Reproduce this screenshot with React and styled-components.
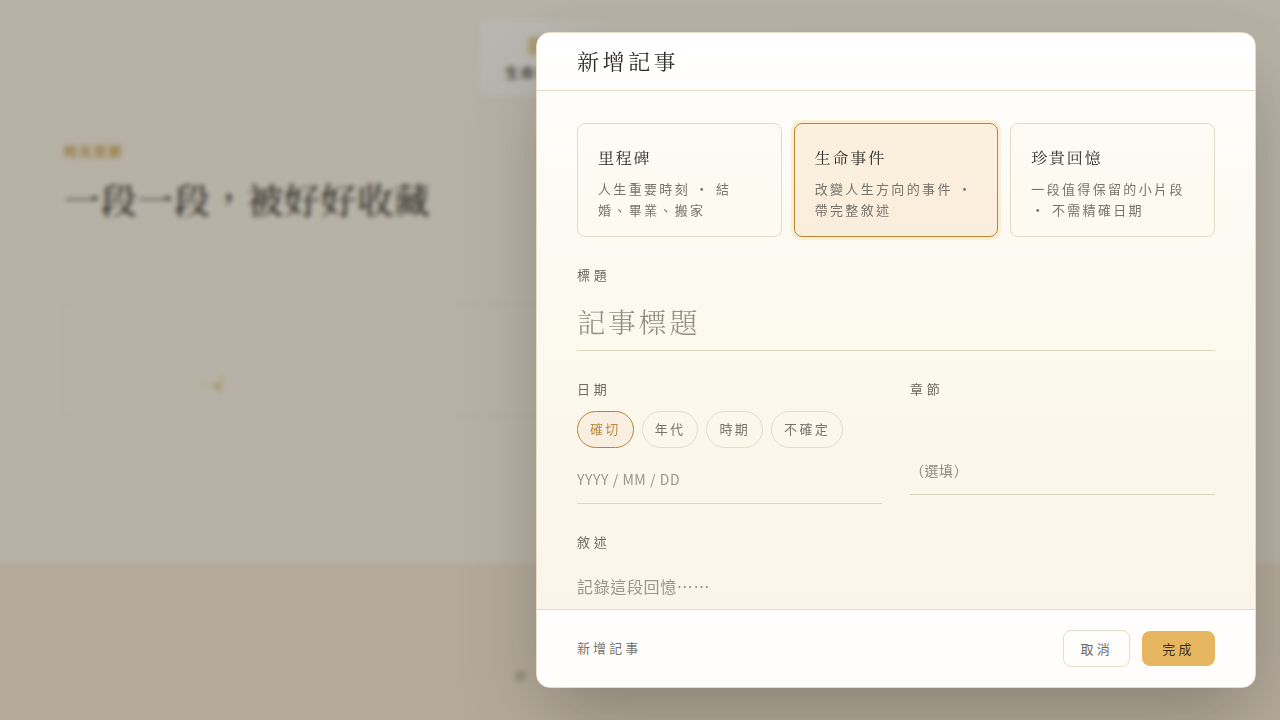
import { useState } from 'react';
import styled, { createGlobalStyle, css } from 'styled-components';

const sans = `'Noto Sans CJK TC', 'Noto Sans', sans-serif`;
const serif = `'Noto Serif TC', 'Noto Serif CJK TC', 'Noto Serif CJK JP', 'Liberation Serif', serif`;

const types = [
	{ id: 'milestone', title: '里程碑', text: '人生重要時刻 · 結婚、畢業、搬家' },
	{ id: 'event', title: '生命事件', text: '改變人生方向的事件 · 帶完整敘述' },
	{ id: 'memory', title: '珍貴回憶', text: '一段值得保留的小片段 · 不需精確日期' },
];

const precisions = ['確切', '年代', '時期', '不確定'];

export default function App() {
	const [ type, setType ] = useState('event');
	const [ precision, setPrecision ] = useState('確切');

	return (
		<>
			<GlobalStyle />
			<Page>
				<Tabs>
					<Tab>
						<TabIcon />
						生命事件
					</Tab>
				</Tabs>
				<Chapters>
					<Eyebrow>時光章節</Eyebrow>
					<Heading>一段一段，被好好收藏</Heading>
					<EmptyBox>
						<svg width='40' height='24' viewBox='0 0 40 24' fill='none'>
							<path d='M2 11h20l11-8-4 17-9-8' stroke='#e8daae' strokeWidth='1.5' />
							<circle cx='27' cy='13' r='3' fill='#d3c59c' />
						</svg>
					</EmptyBox>
				</Chapters>
				<Bottom>
					<Dot />
				</Bottom>
			</Page>

			<Overlay>
				<Modal>
					<Header>新增記事</Header>

					<Body>
						<TypeGrid>
							{types.map((item)=> (
								<TypeCard
									key={item.id}
									$active={item.id === type}
									onClick={()=>setType(item.id)}
								>
									<TypeTitle>{item.title}</TypeTitle>
									<TypeText>{item.text}</TypeText>
								</TypeCard>
							))}
						</TypeGrid>

						<Field>
							<Label>標題</Label>
							<TitleInput placeholder='記事標題' />
						</Field>

						<Columns>
							<Field>
								<Label>日期</Label>
								<Pills>
									{precisions.map((item)=> (
										<Pill
											key={item}
											$active={item === precision}
											onClick={()=>setPrecision(item)}
										>
											{item}
										</Pill>
									))}
								</Pills>
								<DateInput placeholder='YYYY / MM / DD' />
							</Field>
							<Field>
								<Label>章節</Label>
								<ChapterSelect>（選填）</ChapterSelect>
							</Field>
						</Columns>

						<Field>
							<Label>敘述</Label>
							<Story placeholder='記錄這段回憶⋯⋯' />
						</Field>
					</Body>

					<Footer>
						<FooterText>新增記事</FooterText>
						<Button>取消</Button>
						<Button $primary>完成</Button>
					</Footer>
				</Modal>
			</Overlay>
		</>
	);
}


// STYLES

const GlobalStyle = createGlobalStyle`
	* {
		box-sizing: border-box;
	}
	body {
		margin: 0;
		overflow: hidden;
		font-family: ${sans};
		color: #2f2d29;
	}
	button, input, textarea {
		font-family: inherit;
		margin: 0;
	}
`;

const Page = styled.div`
	display: flex;
	flex-direction: column;
	height: 720px;
	background-color: #f5f0e4;
`;

const Tabs = styled.nav`
	display: flex;
	align-self: center;
	width: 320px;
	height: 76px;
	margin-top: 20px;
	padding: 17px 25px 0;
	border-radius: 8px;
	background: linear-gradient(90deg, #f8f6f3 0, #f8f6f3 60px, #f6f2e8 130px);
`;

const Tab = styled.div`
	display: flex;
	flex-direction: column;
	align-items: center;
	gap: 6px;
	font-size: 14px;
	line-height: 22px;
	font-weight: 500;
	letter-spacing: 0.1em;
	color: #45423c;
`;

const TabIcon = styled.div`
	flex: none;
	width: 16px;
	height: 18px;
	border-radius: 4px;
	background-color: #e3cf9c;
`;

const Chapters = styled.section`
	height: 467px;
	padding: 45px 64px 0;
`;

const Eyebrow = styled.div`
	font-size: 13px;
	line-height: 20px;
	font-weight: 700;
	letter-spacing: 0.14em;
	color: #c9a455;
	text-shadow: 0 0 24px rgba(230, 200, 120, 0.25);
`;

const Heading = styled.h2`
	margin: 10px 0 76px;
	font-family: ${serif};
	font-size: 36px;
	line-height: 56px;
	font-weight: 500;
	letter-spacing: 0.018em;
`;

const EmptyBox = styled.div`
	height: 114px;
	margin-left: -2px;
	padding: 68px 0 0 127px;
	border: 2px solid #efe7d3;
	border-radius: 4px;
`;

const Bottom = styled.section`
	flex: 1;
	padding: 107px 0 0 514px;
	background-color: #f0e4d3;
`;

const Dot = styled.div`
	width: 13px;
	height: 12px;
	border-radius: 50%;
	background-color: #cbc1ab;
`;

const Overlay = styled.div`
	position: fixed;
	inset: 0;
	display: flex;
	justify-content: flex-end;
	padding: 32px 24px;
	background-color: rgba(40, 36, 28, 0.3);
	backdrop-filter: blur(2.6px);
`;

const Modal = styled.div`
	display: flex;
	flex-direction: column;
	width: 720px;
	height: 656px;
	border: 1px solid #e8dcc4;
	border-radius: 14px;
	background: linear-gradient(180deg, #fffefd 0%, #fcf9f0 38%, #fbf8ec 55%, #fcf5ea 82%, #faf5e8 92%);
	box-shadow: 0 32px 80px -10px rgba(47, 43, 30, 0.34);
	overflow: hidden;
`;

const Header = styled.div`
	flex: none;
	height: 58px;
	padding: 0 40px;
	border-bottom: 1px solid #e6d8c2;
	background-color: rgba(255, 255, 255, 0.6);
	font-family: ${serif};
	font-size: 22px;
	line-height: 55px;
	font-weight: 400;
	letter-spacing: 0.16em;
`;

const Body = styled.div`
	flex: 1;
	min-height: 0;
	padding: 32px 40px 0;
	overflow: hidden;
`;

const TypeGrid = styled.div`
	display: grid;
	grid-template-columns: repeat(3, 1fr);
	gap: 12px;
	margin-bottom: 27px;
`;

const TypeCard = styled.button`
	height: 114px;
	padding: 17px 20px 15px;
	border: 1px solid #e3dcc4;
	border-radius: 8px;
	background-color: rgba(253, 250, 240, 0.5);
	text-align: left;
	cursor: pointer;
	${({ $active })=> $active && css`
		border-color: #b9852f;
		background: linear-gradient(180deg, #fbf0de, #faeddb);
		box-shadow: 0 0 0 3px #fbeed4;
	`}
`;

const TypeTitle = styled.div`
	margin-bottom: 4px;
	font-family: ${serif};
	font-size: 16px;
	line-height: 34px;
	font-weight: 400;
	letter-spacing: 0.11em;
	color: #2f2d29;
`;

const TypeText = styled.div`
	font-size: 13px;
	line-height: 20.8px;
	letter-spacing: 0.18em;
	color: #77726a;
`;

const Field = styled.div`
	display: flex;
	flex-direction: column;
`;

const Label = styled.label`
	height: 21px;
	font-size: 13px;
	line-height: 21px;
	letter-spacing: 0.28em;
	color: #6f6a60;
`;

const inputStyle = css`
	display: block;
	width: 100%;
	padding: 0;
	border: none;
	border-bottom: 1px solid #ddd6c0;
	border-radius: 0;
	outline: none;
	background: none;
	color: #2f2d29;
	&::placeholder {
		color: #9b968a;
		opacity: 1;
	}
`;

const TitleInput = styled.input`
	${inputStyle}
	height: 57px;
	margin: 9px 0 27px;
	padding-bottom: 2px;
	font-family: ${serif};
	font-size: 28px;
	font-weight: 300;
	letter-spacing: 0.1em;
	&::placeholder {
		color: #928e82;
	}
`;

const Columns = styled.div`
	display: grid;
	grid-template-columns: 1fr 1fr;
	gap: 28px;
	margin-bottom: 27px;
`;

const Pills = styled.div`
	display: flex;
	gap: 8px;
	margin: 12px 0 8px;
`;

const Pill = styled.button`
	height: 37px;
	padding: 0 12px 2px;
	border: 1px solid #e3ddcb;
	border-radius: 999px;
	background: none;
	font-size: 13px;
	letter-spacing: 0.18em;
	color: #77726a;
	cursor: pointer;
	${({ $active })=> $active && css`
		border-color: #b9852f;
		background-color: #f8efe2;
		color: #b98a3f;
	`}
`;

const DateInput = styled.input`
	${inputStyle}
	height: 48px;
	padding-bottom: 2px;
	font-size: 14px;
	letter-spacing: 0.04em;
`;

const ChapterSelect = styled.div`
	${inputStyle}
	height: 47px;
	margin-top: 49px;
	font-size: 14px;
	line-height: 44px;
	letter-spacing: 0.04em;
	color: #8f8a7e;
`;

const Story = styled.textarea`
	${inputStyle}
	height: 160px;
	margin-top: 8px;
	padding-top: 12px;
	font-size: 16px;
	line-height: 29px;
	letter-spacing: 0.04em;
	resize: none;
`;

const Footer = styled.div`
	flex: none;
	display: flex;
	align-items: center;
	gap: 12px;
	height: 78px;
	padding: 0 40px;
	border-top: 1px solid #e6d8c2;
	background-color: #fffefd;
`;

const FooterText = styled.span`
	flex: 1;
	padding-bottom: 2px;
	font-size: 13px;
	letter-spacing: 0.24em;
	color: #77726a;
`;

const Button = styled.button`
	height: 37px;
	padding: 0 16px;
	border: 1px solid #e6dcc8;
	border-radius: 8px;
	background: none;
	font-size: 13px;
	letter-spacing: 0.26em;
	color: #6f6a60;
	cursor: pointer;
	${({ $primary })=> $primary && css`
		height: 35px;
		padding: 0 20px;
		border: none;
		background-color: #e6b760;
		color: #3a2f1a;
	`}
`;
